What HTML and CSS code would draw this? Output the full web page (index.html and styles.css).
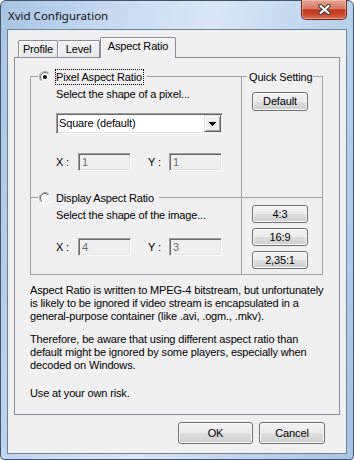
FILE: index.html
```html
<!DOCTYPE html>
<html lang="en">
  <head>
    <meta charset="UTF-8" />
    <title>Xvid Configuration</title>
    <link rel="stylesheet" href="styles.css">
  </head>
  <body>
    <div class="window">
      <div class="titlebar">
        <span class="title">Xvid Configuration</span>
        <div class="close">
          <svg width="13" height="11" viewBox="0 0 13 11">
            <path d="M2.5 2 L10.5 9 M10.5 2 L2.5 9" stroke="#3a3a3a" stroke-width="4.2" stroke-linecap="round" />
            <path d="M2.5 2 L10.5 9 M10.5 2 L2.5 9" stroke="#fff" stroke-width="2.2" stroke-linecap="round" />
          </svg>
        </div>
      </div>

      <div class="client">
        <div class="tabs">
          <div class="tab tab-profile">Profile</div>
          <div class="tab tab-level">Level</div>
          <div class="tab tab-active">Aspect Ratio</div>
        </div>

        <div class="panel">
          <div class="group">
            <div class="cell cell-pixel">
              <div class="legend">
                <svg class="radio" width="12" height="12" viewBox="0 0 12 12">
                  <circle cx="6" cy="6" r="5.5" fill="#fff" stroke="#fff" />
                  <path d="M2.1 9.9 A5.5 5.5 0 0 1 9.9 2.1" fill="none" stroke="#a0a0a0" />
                  <circle cx="6" cy="6" r="4.5" fill="#fff" stroke="#e3e3e3" />
                  <path d="M2.8 9.2 A4.5 4.5 0 0 1 9.2 2.8" fill="none" stroke="#696969" />
                  <circle cx="6" cy="6" r="2" fill="#000" />
                </svg>
                <span class="legend-label focused">Pixel Aspect Ratio</span>
              </div>
              <div class="hint">Select the shape of a pixel...</div>
              <div class="combo">
                <span class="combo-value">Square (default)</span>
                <span class="combo-arrow">
                  <svg width="7" height="4" viewBox="0 0 7 4">
                    <path d="M0 0h7v1H0zM1 1h5v1H1zM2 2h3v1H2zM3 3h1v1H3z" fill="#000" />
                  </svg>
                </span>
              </div>
              <div class="xy xy-pixel">
                <span class="xy-label">X :</span>
                <span class="field">1</span>
                <span class="xy-label xy-label-y">Y :</span>
                <span class="field">1</span>
              </div>
            </div>

            <div class="cell cell-quick">
              <div class="legend legend-text">Quick Setting</div>
              <button class="btn btn-small btn-default">Default</button>
            </div>

            <div class="cell cell-display">
              <div class="legend">
                <svg class="radio" width="12" height="12" viewBox="0 0 12 12">
                  <circle cx="6" cy="6" r="5.5" fill="#fff" stroke="#fff" />
                  <path d="M2.1 9.9 A5.5 5.5 0 0 1 9.9 2.1" fill="none" stroke="#a0a0a0" />
                  <circle cx="6" cy="6" r="4.5" fill="#fff" stroke="#e3e3e3" />
                  <path d="M2.8 9.2 A4.5 4.5 0 0 1 9.2 2.8" fill="none" stroke="#696969" />
                </svg>
                <span class="legend-label">Display Aspect Ratio</span>
              </div>
              <div class="hint">Select the shape of the image...</div>
              <div class="xy xy-display">
                <span class="xy-label">X :</span>
                <span class="field">4</span>
                <span class="xy-label xy-label-y">Y :</span>
                <span class="field">3</span>
              </div>
            </div>

            <div class="cell cell-presets">
              <button class="btn btn-small">4:3</button>
              <button class="btn btn-small">16:9</button>
              <button class="btn btn-small">2,35:1</button>
            </div>
          </div>

          <p class="note note-first">Aspect Ratio is written to MPEG-4 bitstream, but unfortunately<br>is likely to be ignored if video stream is encapsulated in a<br>general-purpose container (like .avi, .ogm., .mkv).</p>
          <p class="note">Therefore, be aware that using different aspect ratio than<br>default might be ignored by some players, especially when<br>decoded on Windows.</p>
          <p class="note note-last">Use at your own risk.</p>
        </div>

        <div class="actions">
          <button class="btn btn-ok">OK</button>
          <button class="btn btn-cancel">Cancel</button>
        </div>
      </div>
    </div>
  </body>
</html>
```

FILE: styles.css
```css
body {
  margin: 0;
  font-family: "Liberation Sans", Arial, sans-serif;
  font-size: 11px;
  line-height: 13px;
  letter-spacing: -0.15px;
  color: #000;
  background: #fff;
}
.window {
  width: 354px;
  height: 460px;
  box-sizing: border-box;
  border: 1px solid #44566d;
  border-radius: 6px 6px 4px 4px;
  padding: 0 6px 5px;
  display: flex;
  flex-direction: column;
  background: linear-gradient(100deg, #a9c4e3 0%, #cbddf2 30%, #d9e7f6 50%, #bed4ec 75%, #a8c4e4 100%);
}
.titlebar {
  height: 28px;
  display: flex;
  align-items: flex-start;
}
.title {
  font-family: "Noto Sans", "Open Sans", sans-serif;
  font-size: 11.5px;
  line-height: 15px;
  letter-spacing: 0;
  margin: 7px 0 0 1px;
  color: #111;
}
.close {
  margin: -1px 0 0 auto;
  width: 46px;
  height: 20px;
  box-sizing: border-box;
  border: 1px solid #6a2a1f;
  border-top: none;
  border-radius: 0 0 5px 5px;
  background: linear-gradient(#e6a595 0%, #d77a64 45%, #c0391f 52%, #c94428 75%, #dd7152 100%);
  box-shadow: inset 0 0 0 1px rgba(255, 210, 200, 0.45);
  display: flex;
  align-items: center;
  justify-content: center;
}
.client {
  flex: 1;
  border: 1px solid #6f8197;
  background: #f0f0f0;
  padding: 7px 6px 0;
}

/* tab strip */
.tabs {
  display: flex;
  align-items: flex-end;
  height: 20px;
  padding-left: 4px;
}
.tab {
  box-sizing: border-box;
  height: 17px;
  padding-top: 2px;
  text-align: center;
  border: 1px solid #898c95;
  border-bottom: none;
  border-radius: 2px 2px 0 0;
  background: linear-gradient(#f3f3f3, #e9e9e9);
  box-shadow: inset 1px 1px #fff;
}
.tab-profile {
  width: 40px;
}
.tab-level {
  width: 42px;
  border-left: none;
}
.tab-active {
  width: 76px;
  height: 21px;
  margin-bottom: -1px;
  padding-top: 2px;
  background: #f0f0f0;
  position: relative;
  z-index: 1;
}
.panel {
  height: 358px;
  box-sizing: border-box;
  border: 1px solid #898c95;
  padding: 18px 15px 0;
}

/* aspect ratio group */
.group {
  display: grid;
  grid-template-columns: 211px 80px;
  grid-template-rows: 121px 76px;
  width: 293px;
  box-sizing: border-box;
  border: 1px solid #a0a0a0;
}
.cell {
  box-sizing: border-box;
}
.cell-pixel,
.cell-display {
  border-right: 1px solid #a0a0a0;
  padding-left: 25px;
}
.cell-pixel,
.cell-quick {
  border-bottom: 1px solid #a0a0a0;
}
.legend {
  display: flex;
  align-items: center;
  gap: 4px;
  width: max-content;
  height: 16px;
  margin: -8px 0 0 -18px;
  padding: 0 3px 0 1px;
  background: #f0f0f0;
}
.legend-label {
  border: 1px solid transparent;
  line-height: 14px;
  padding-right: 1px;
}
.legend-label.focused {
  border: 1px dotted #000;
}
.legend-text {
  margin-left: -5px;
  padding: 0 1px 0 2px;
  line-height: 16px;
}
.hint {
  margin-top: 3px;
}
.combo {
  display: flex;
  width: 167px;
  height: 21px;
  box-sizing: border-box;
  margin-top: 12px;
  padding: 1px;
  border: 1px solid;
  border-color: #a0a0a0 #fff #fff #a0a0a0;
  box-shadow: inset 1px 1px #696969, inset -1px -1px #e3e3e3;
  background: #fff;
}
.combo-value {
  flex: 1;
  padding: 2px 0 0 1px;
}
.combo-arrow {
  width: 17px;
  height: 17px;
  box-sizing: border-box;
  border: 1px solid;
  border-color: #e3e3e3 #696969 #696969 #e3e3e3;
  box-shadow: inset 1px 1px #fff, inset -1px -1px #a0a0a0;
  background: #f0f0f0;
  display: flex;
  align-items: center;
  justify-content: center;
}
.xy {
  display: flex;
  align-items: center;
}
.xy-pixel {
  margin-top: 19px;
}
.xy-display {
  margin-top: 16px;
}
.xy-label {
  width: 22px;
}
.xy-label-y {
  width: 21px;
  margin-left: 17px;
}
.field {
  width: 53px;
  height: 18px;
  box-sizing: border-box;
  padding: 2px 0 0 3px;
  border: 1px solid;
  border-color: #a0a0a0 #fff #fff #a0a0a0;
  box-shadow: inset 1px 1px #696969, inset -1px -1px #e3e3e3;
  color: #6d6d6d;
}
.cell-quick {
  padding-left: 10px;
}
.btn {
  font: inherit;
  letter-spacing: inherit;
  color: #000;
  padding: 0;
  box-sizing: border-box;
  border: 1px solid #707070;
  border-radius: 3px;
  background: linear-gradient(#f2f2f2 0%, #ebebeb 50%, #dddddd 51%, #cfcfcf 100%);
  box-shadow: inset 0 0 0 1px #fcfcfc;
}
.btn-small {
  display: block;
  width: 56px;
  height: 18px;
}
.btn-default {
  margin-top: 7px;
  height: 19px;
}
.cell-presets {
  padding: 7px 0 0 10px;
  display: flex;
  flex-direction: column;
  gap: 5px;
}

/* notes */
.note {
  margin: 10px 0 0;
  white-space: nowrap;
}
.note-first {
  margin-top: 9px;
}
.note-last {
  margin-top: 15px;
}

/* dialog buttons */
.actions {
  display: flex;
  justify-content: flex-end;
  gap: 6px;
  margin: 7px 15px 0 0;
}
.btn-ok {
  width: 75px;
  height: 22px;
}
.btn-cancel {
  width: 66px;
  height: 22px;
}
```
